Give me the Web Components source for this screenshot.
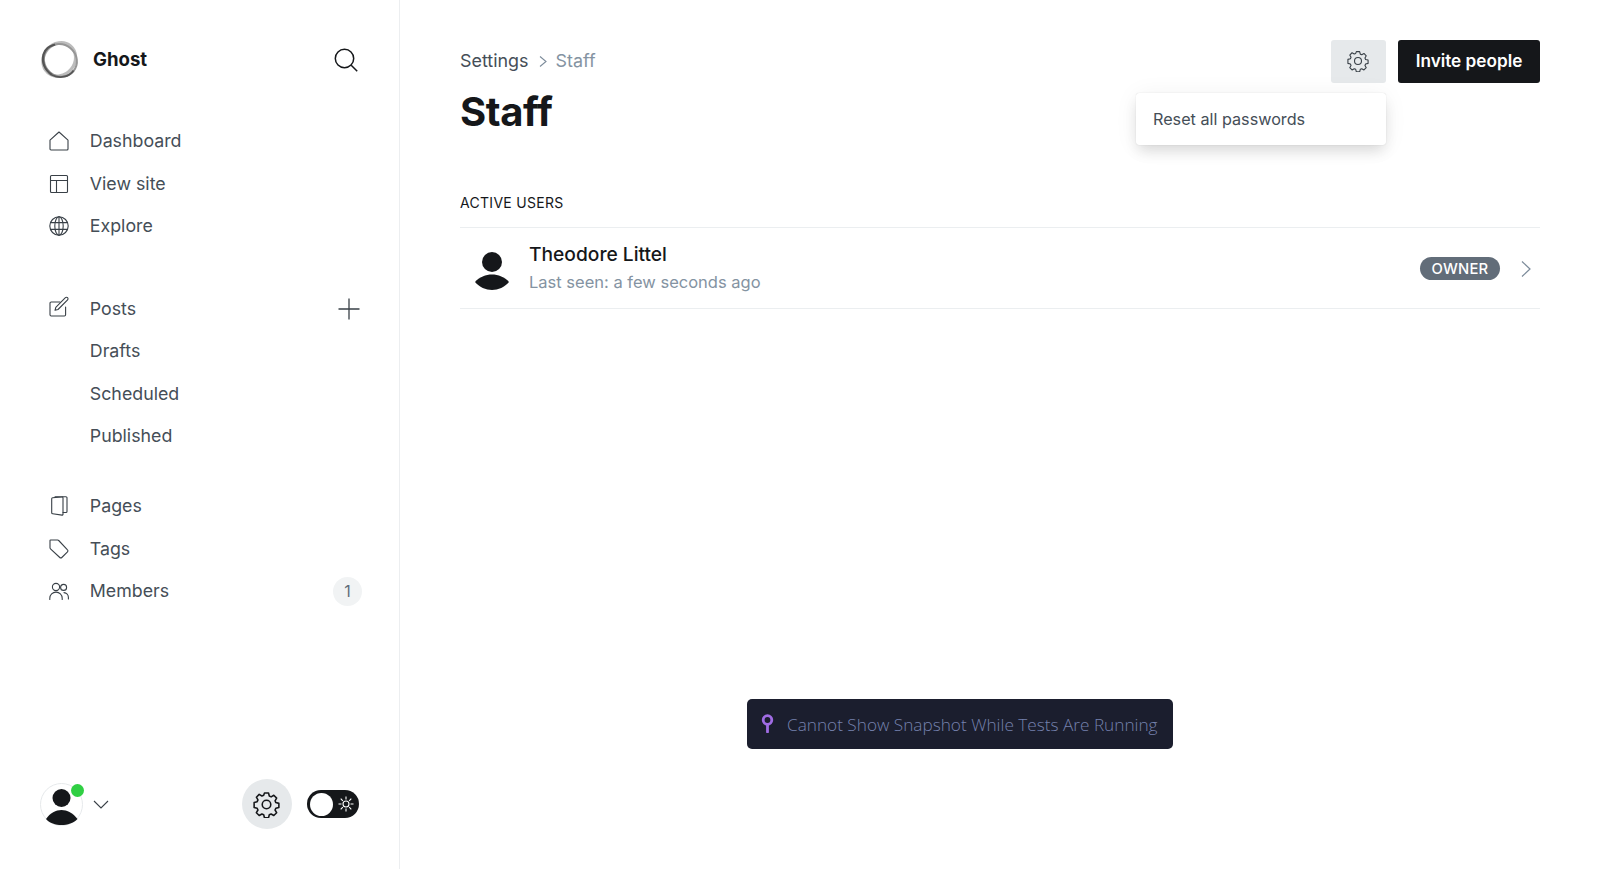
<!DOCTYPE html>
<html lang="en">
<head>
<meta charset="utf-8">
<title>Staff - Ghost</title>
<style>
  html, body { margin: 0; height: 100%; background: #fff; }
  body { font-family: Inter, "Liberation Sans", sans-serif; color: #15171a; overflow: hidden; }
</style>
</head>
<body>
<gh-app>
  <gh-sidebar slot="side">
    <gh-nav-group>
      <gh-nav-item icon="home">Dashboard</gh-nav-item>
      <gh-nav-item icon="layout">View site</gh-nav-item>
      <gh-nav-item icon="globe">Explore</gh-nav-item>
    </gh-nav-group>
    <gh-nav-group>
      <gh-nav-item icon="edit" action="plus">Posts</gh-nav-item>
      <gh-nav-item icon="none">Drafts</gh-nav-item>
      <gh-nav-item icon="none">Scheduled</gh-nav-item>
      <gh-nav-item icon="none">Published</gh-nav-item>
    </gh-nav-group>
    <gh-nav-group>
      <gh-nav-item icon="book">Pages</gh-nav-item>
      <gh-nav-item icon="tag">Tags</gh-nav-item>
      <gh-nav-item icon="users" count="1">Members</gh-nav-item>
    </gh-nav-group>
  </gh-sidebar>
  <gh-staff-page>
    <gh-user-row name="Theodore Littel" seen="Last seen: a few seconds ago" role="OWNER"></gh-user-row>
  </gh-staff-page>
</gh-app>
<gh-toast>Cannot Show Snapshot While Tests Are Running</gh-toast>

<script>
const ICONS = {
  home: '<path d="M1 9.2 10 1l9 8.2V18a1 1 0 0 1-1 1H2a1 1 0 0 1-1-1z"/>',
  layout: '<rect x="1.5" y="1.5" width="17" height="17" rx="1"/><path d="M1.5 6.5h17M7.5 6.5v12"/>',
  globe: '<circle cx="10" cy="10" r="9.2"/><ellipse cx="10" cy="10" rx="4.2" ry="9.2"/><path d="M1.6 6.6h16.8M1.6 13.4h16.8M10 .8v18.4"/>',
  edit: '<g transform="translate(0 -2)"><path d="M11 5H2.2A1.2 1.2 0 0 0 1 6.2v11.600A1.2 1.2 0 0 0 2.2 19h13.2a1.2 1.2 0 0 0 1.2-1.2V10"/><path d="M9 12.500l-3 .8.8-3L16.400.7a1.500 1.500 0 0 1 2.200 2.100z"/></g>',
  book: '<path d="M6 .8h11a1 1 0 0 1 1 1v13.700a1 1 0 0 1-1 1h-3"/><path d="M3.600 1.700 12.800 .9a1 1 0 0 1 1.200 1V18.400a.8.8 0 0 1-1 .7l-9.300-1.300a1 1 0 0 1-1-1V2.700a1 1 0 0 1 .9-1z"/>',
  tag: '<path d="M1.600 1h7a1.600 1.600 0 0 1 1.100.5l8.800 9.300a1.400 1.400 0 0 1 0 2l-5.700 5.700a1.400 1.400 0 0 1-2 0L1.500 9.800A1.600 1.600 0 0 1 1 8.700V1.600a.6.6 0 0 1 .6-.6z"/>',
  users: '<circle cx="7" cy="6" r="3.600"/><path d="M.8 18.500v-1.200a6.200 6.200 0 0 1 12.400 0v1.200"/><circle cx="14.600" cy="6.400" r="3"/><path d="M15 11.600a4.800 4.800 0 0 1 4.400 4.800v1.600"/>'
};

const GEAR = '<path d="M10.2 2.2h3.6l.7 2.7 1.6.7 2.4-1.4 2.5 2.5-1.4 2.4.7 1.6 2.7.7v3.6l-2.7.7-.7 1.6 1.4 2.4-2.5 2.5-2.4-1.4-1.6.7-.7 2.7h-3.6l-.7-2.7-1.6-.7-2.4 1.4-2.5-2.5 1.4-2.4-.7-1.6-2.7-.7V10.600l2.700-.7.7-1.600-1.400-2.400 2.500-2.500 2.400 1.400 1.600-.7z" transform="translate(0 -.4)" stroke-linejoin="round"/><circle cx="12" cy="12" r="3.800"/>';

class GhApp extends HTMLElement {
  constructor() {
    super();
    this.attachShadow({ mode: "open" });
    this.shadowRoot.innerHTML = `
      <style>
        :host { display: flex; height: 869px; }
        .side { display: block; flex: 0 0 399px; border-right: 1px solid #eceef0; }
        .main { flex: 1; min-width: 0; }
      </style>
      <div class="side"><slot name="side"></slot></div>
      <div class="main"><slot></slot></div>
    `;
  }
}

class GhSidebar extends HTMLElement {
  constructor() {
    super();
    this.attachShadow({ mode: "open" });
    this.shadowRoot.innerHTML = `
      <style>
        :host { display: flex; flex-direction: column; height: 869px; box-sizing: border-box; padding: 40px 35px 40px 40px; }
        .brand { display: flex; align-items: center; height: 40px; margin-bottom: 40px; }
        .brand span { margin-left: 13px; margin-top: -2px; font: 700 18.600px/1 Inter, "Liberation Sans", sans-serif; color: #15171a; }
        .logo { width: 40px; height: 40px; }
        .search { margin-left: auto; margin-right: 6px; width: 24px; height: 24px; }
        nav { display: flex; flex-direction: column; }
        ::slotted(gh-nav-group:nth-child(2)) { margin-top: 40px; }
        ::slotted(gh-nav-group:nth-child(3)) { margin-top: 27.300px; }
        .foot { margin-top: auto; display: flex; align-items: center; height: 50px; }
        .avatar { position: relative; width: 43px; height: 43px; }
        .dot { position: absolute; top: 1px; right: -1px; width: 13px; height: 13px; border-radius: 50%; background: #30cf43; }
        .caret { width: 16px; height: 9px; margin-left: 10px; margin-top: 1px; }
        .gear { margin-left: auto; width: 50px; height: 50px; border-radius: 50%; background: #e6e9eb; display: flex; align-items: center; justify-content: center; }
        .gear svg { width: 27px; height: 27px; margin-left: -1px; }
        .toggle { margin-left: 15px; margin-right: 5px; width: 52px; height: 28px; box-sizing: border-box; border-radius: 14px; background: #15171a; padding: 3px; display: flex; align-items: center; }
        .knob { width: 23px; height: 23px; border-radius: 50%; background: #fff; }
        .sun { width: 16px; height: 16px; margin-left: 5px; }
      </style>
      <div class="brand">
        <svg class="logo" viewBox="0 0 40 40" fill="none">
          <ellipse cx="20" cy="19" rx="17.500" ry="15.500" transform="rotate(-50 20 20)" stroke="#bcbcbc" stroke-width="3.200"/>
          <ellipse cx="20.500" cy="20" rx="17" ry="15.800" transform="rotate(40 20 20)" stroke="#969696" stroke-width="2"/>
          <path d="M12 35C4.500 30 1.500 22 3.500 14.500S11 6 15 4.500" stroke="#555" stroke-width="2.200"/>
          <path d="M12 35c8 4 17 2 21.500-4.500" stroke="#555" stroke-width="1.900"/>
        </svg>
        <span>Ghost</span>
        <svg class="search" viewBox="0 0 24 24" fill="none" stroke="#15171a" stroke-width="1.500"><circle cx="10.500" cy="10.500" r="9.200"/><path d="M17.200 17.200l6 6"/></svg>
      </div>
      <nav><slot></slot></nav>
      <div class="foot">
        <div class="avatar">
          <svg viewBox="0 0 43 43" width="43" height="43">
            <circle cx="21.500" cy="21.500" r="21" fill="#fff" stroke="#e6e9eb"/>
            <circle cx="21.500" cy="15" r="9" fill="#15171a"/>
            <path d="M6 36c4-6 10-9 15.500-9S33 30 37.500 36c-4 4-10 6-16 6s-12-2-15.500-6z" fill="#15171a"/>
          </svg>
          <span class="dot"></span>
        </div>
        <svg class="caret" viewBox="0 0 16 9" fill="none" stroke="#394047" stroke-width="1.100"><path d="M1 1l7 7 7-7"/></svg>
        <div class="gear"><svg viewBox="0 0 24 24" fill="none" stroke="#15171a" stroke-width="1.400">${GEAR}</svg></div>
        <div class="toggle">
          <span class="knob"></span>
          <svg class="sun" viewBox="0 0 16 16" fill="none" stroke="#fff" stroke-width="1.100"><circle cx="8" cy="8" r="3"/><path d="M8 .5v3M8 12.500v3M.5 8h3M12.500 8h3M2.700 2.700l2.100 2.100M11.200 11.200l2.100 2.100M2.700 13.300l2.100-2.100M11.200 4.800l2.100-2.100"/></svg>
        </div>
      </div>
    `;
  }
}

class GhNavGroup extends HTMLElement {
  constructor() {
    super();
    this.attachShadow({ mode: "open" });
    this.shadowRoot.innerHTML = `
      <style>:host { display: block; }</style>
      <slot></slot>
    `;
  }
}

class GhNavItem extends HTMLElement {
  constructor() {
    super();
    this.attachShadow({ mode: "open" });
  }
  connectedCallback() {
    const icon = ICONS[this.getAttribute("icon")] || "";
    const count = this.getAttribute("count");
    const plus = this.getAttribute("action") === "plus";
    this.shadowRoot.innerHTML = `
      <style>
        :host { display: flex; align-items: center; height: 42.500px; padding-left: 9px; font: 400 17.800px/1 Inter, "Liberation Sans", sans-serif; color: #454e57; }
        .ico { flex: 0 0 20px; height: 20px; margin-right: 20.800px; }
        .ico svg { display: block; width: 20px; height: 20px; overflow: visible; }
        .plus { margin-left: auto; margin-right: 4px; width: 22px; height: 22px; }
        .count { margin-left: auto; width: 29px; height: 29px; border-radius: 50%; background: #f1f3f4; color: #626d79; display: flex; align-items: center; justify-content: center; font-size: 16px; margin-right: 2px; }
      </style>
      <span class="ico">${icon ? `<svg viewBox="0 0 20 20" fill="none" stroke="#394047" stroke-width="1.100" stroke-linejoin="round" stroke-linecap="round">${icon}</svg>` : ""}</span>
      <slot></slot>
      ${plus ? '<svg class="plus" viewBox="0 0 22 22" fill="none" stroke="#394047" stroke-width="1.300"><path d="M11 .5v21M.5 11h21"/></svg>' : ""}
      ${count ? `<span class="count">${count}</span>` : ""}
    `;
  }
}

class GhStaffPage extends HTMLElement {
  constructor() {
    super();
    this.attachShadow({ mode: "open" });
    this.shadowRoot.innerHTML = `
      <style>
        :host { display: block; padding: 40px 60px 0; position: relative; }
        .top { display: flex; align-items: flex-start; }
        .crumbs { display: flex; align-items: center; height: 41px; padding-bottom: 2px; font: 400 17.900px/1 Inter, "Liberation Sans", sans-serif; color: #454e57; }
        .crumbs svg { width: 8px; height: 11px; margin: 1px 9px 0 10px; }
        .crumbs b { font-weight: 400; color: #8493a2; }
        h1 { margin: 5px 0 0; font: 700 40px/1.200 Inter, "Liberation Sans", sans-serif; letter-spacing: -.4px; color: #15171a; }
        .actions { margin-left: auto; display: flex; gap: 12px; position: relative; }
        .btn-gear { width: 55px; height: 43px; border-radius: 3px; background: #e6e9eb; display: flex; align-items: center; justify-content: center; }
        .btn-gear svg { width: 22px; height: 22px; margin: -2px 2px 0 0; }
        .btn-invite { width: 142px; height: 43px; border-radius: 3px; background: #15171a; color: #fff; font: 600 17.200px/42px Inter, "Liberation Sans", sans-serif; text-align: center; }
        .menu { position: absolute; top: 53px; right: 154px; width: 250px; height: 52px; box-sizing: border-box; padding: 0 17px; background: #fff; border-radius: 3px; box-shadow: 0 0 1px rgba(0,0,0,.2), 0 8px 14px -2px rgba(0,0,0,.12), 0 2px 24px rgba(0,0,0,.06); display: flex; align-items: center; font: 400 16.200px/1 Inter, "Liberation Sans", sans-serif; color: #454e57; }
        h2 { margin: 57px 0 14px; font: 400 14px/20px Inter, "Liberation Sans", sans-serif; letter-spacing: .3px; color: #15171a; text-transform: uppercase; }
      </style>
      <div class="top">
        <div>
          <div class="crumbs">Settings<svg viewBox="0 0 8 11" fill="none" stroke="#7c8b9a" stroke-width="1.100"><path d="M1 .5l6 5-6 5"/></svg><b>Staff</b></div>
          <h1>Staff</h1>
        </div>
        <div class="actions">
          <div class="btn-gear"><svg viewBox="0 0 24 24" fill="none" stroke="#394047" stroke-width="1.200">${GEAR}</svg></div>
          <div class="btn-invite">Invite people</div>
          <div class="menu">Reset all passwords</div>
        </div>
      </div>
      <h2>Active users</h2>
      <slot></slot>
    `;
  }
}

class GhUserRow extends HTMLElement {
  constructor() {
    super();
    this.attachShadow({ mode: "open" });
  }
  connectedCallback() {
    this.shadowRoot.innerHTML = `
      <style>
        :host { display: flex; align-items: center; height: 82px; box-sizing: border-box; border-top: 1px solid #ebeef0; border-bottom: 1px solid #ebeef0; font-family: Inter, "Liberation Sans", sans-serif; }
        .pic { width: 34px; height: 38px; margin-left: 15px; margin-right: 20px; margin-top: 6px; }
        .info { margin-top: -2px; }
        .name { font-weight: 500; font-size: 19.200px; line-height: 24px; color: #15171a; }
        .seen { margin-top: 6px; font-size: 16.500px; line-height: 20px; color: #8493a2; }
        .role { margin-left: auto; margin-right: -1px; margin-top: 1px; width: 80px; height: 23px; border-radius: 12px; background: #626d79; color: #fff; font-size: 14.800px; font-weight: 500; line-height: 24px; text-align: center; letter-spacing: .2px; }
        .go { width: 10px; height: 16px; margin: 1px 9px 0 22px; }
      </style>
      <svg class="pic" viewBox="0 0 34 38" fill="#15171a"><circle cx="17" cy="10" r="10"/><path d="M0 30c4-5 11-7.500 17-7.500S30 25 34 30c-4 5-11 8-17 8S4 35 0 30z"/></svg>
      <div class="info">
        <div class="name">${this.getAttribute("name")}</div>
        <div class="seen">${this.getAttribute("seen")}</div>
      </div>
      <span class="role">${this.getAttribute("role")}</span>
      <svg class="go" viewBox="0 0 10 16" fill="none" stroke="#7c8b9a" stroke-width="1.200"><path d="M1 .5l8 7.500-8 7.500"/></svg>
    `;
  }
}

class GhToast extends HTMLElement {
  constructor() {
    super();
    this.attachShadow({ mode: "open" });
    this.shadowRoot.innerHTML = `
      <style>
        :host { position: fixed; left: 747px; top: 699px; width: 426px; height: 50px; box-sizing: border-box; padding-left: 13.500px; padding-top: 2px; display: flex; align-items: center; border-radius: 5px; background: #1b1e2e; color: #7581ad; font: 300 17.200px/1 "Open Sans", "Noto Sans", sans-serif; }
        svg { width: 13px; height: 19px; margin-right: 13.500px; margin-top: -3px; }
      </style>
      <svg viewBox="0 0 13 19" fill="none" stroke="#a06ce4"><circle cx="6.500" cy="6" r="4.300" stroke-width="2.800"/><path d="M6.500 11v7" stroke-width="2.800" stroke-linecap="round"/></svg>
      <slot></slot>
    `;
  }
}

customElements.define("gh-app", GhApp);
customElements.define("gh-sidebar", GhSidebar);
customElements.define("gh-nav-group", GhNavGroup);
customElements.define("gh-nav-item", GhNavItem);
customElements.define("gh-staff-page", GhStaffPage);
customElements.define("gh-user-row", GhUserRow);
customElements.define("gh-toast", GhToast);
</script>
</body>
</html>
